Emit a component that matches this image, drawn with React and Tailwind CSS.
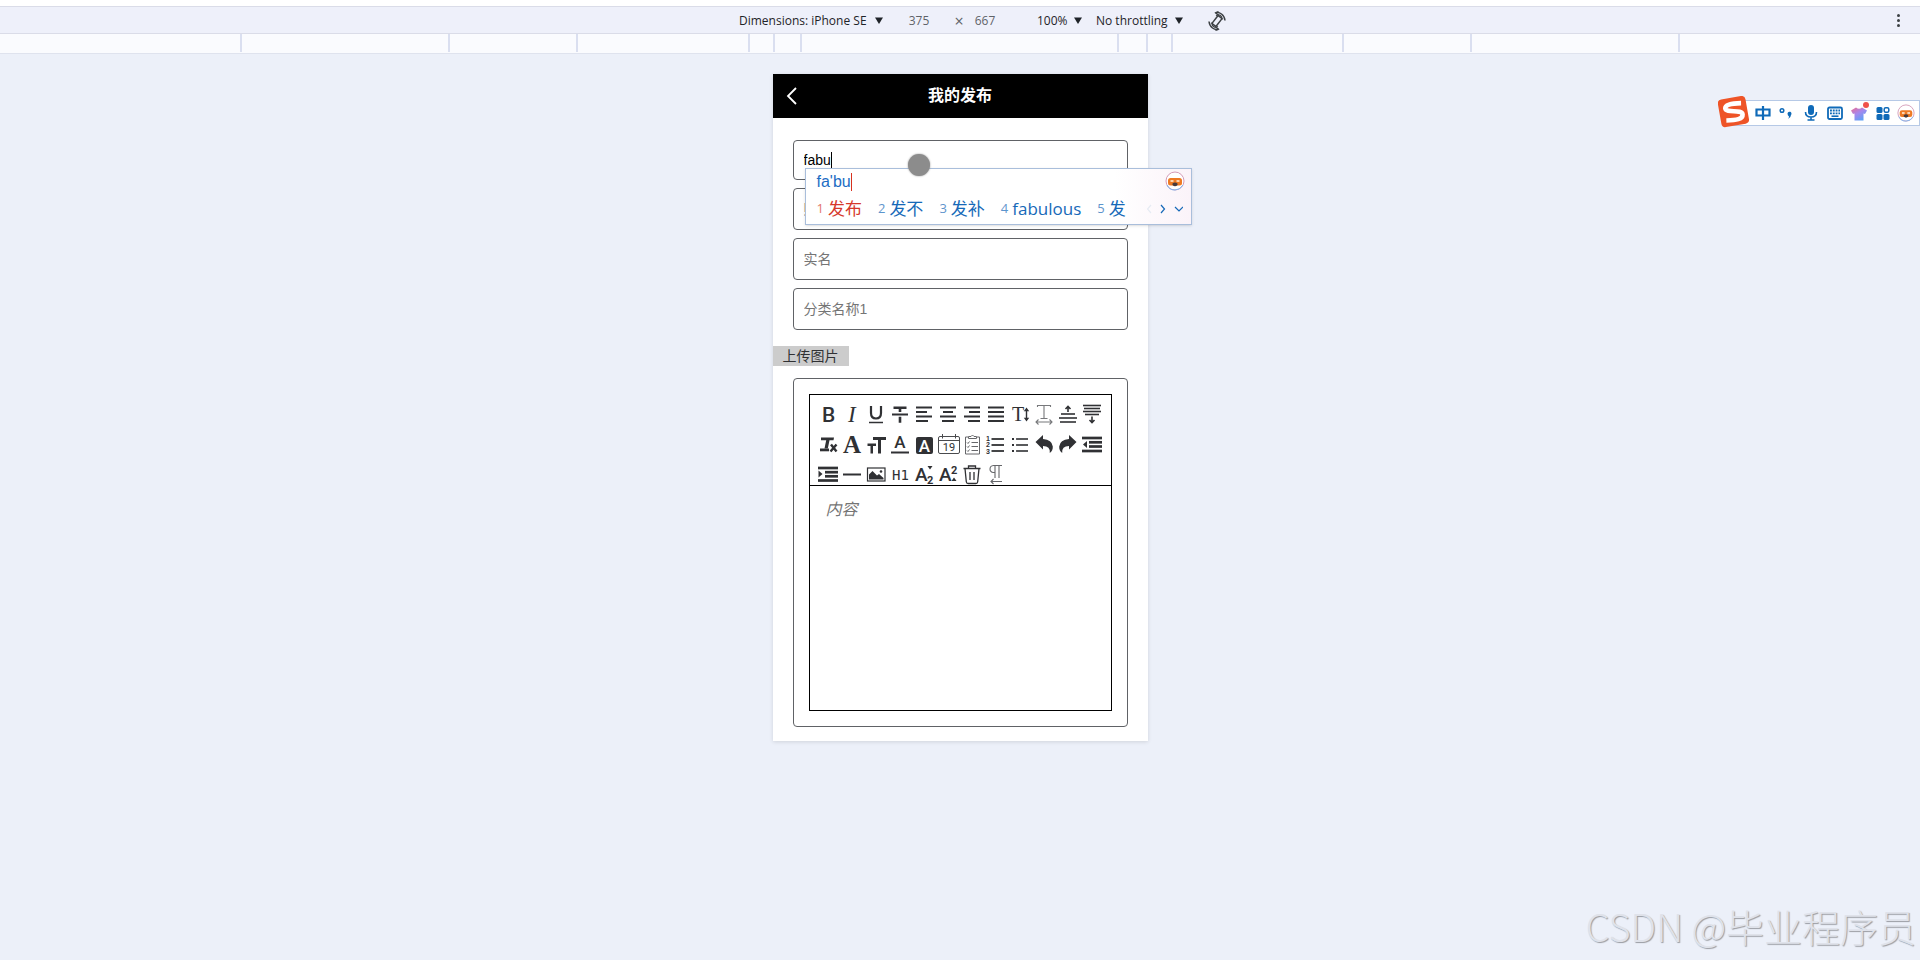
import { useState } from "react";

const ink = "#303134";

const ruler = ["w-[208px]", "w-[128px]", "w-[172px]", "w-[25px]", "w-[27px]", "w-[317px]", "w-[29px]", "w-[25px]", "w-[171px]", "w-[128px]", "w-[208px]"];

const Lines = ({ rows, width = 2 }) =>
  rows.map(([x1, x2, y]) => <path key={y} d={`M${x1} ${y}H${x2}`} stroke={ink} strokeWidth={width} />);

const tools = [
  { name: "Bold", art: <text x="6" y="18" fontSize="21" fontWeight="500" fontFamily="Roboto">B</text> },
  { name: "Italic", art: <text x="8" y="18" fontSize="23" fontStyle="italic" fontFamily="Liberation Serif">I</text> },
  {
    name: "Underline",
    art: (
      <>
        <path d="M7 2v7q0 5.500 5 5.500t5-5.500V2" fill="none" stroke={ink} strokeWidth="2.200" />
        <path d="M5 18.500h14" stroke={ink} strokeWidth="1.500" />
      </>
    ),
  },
  {
    name: "Strikethrough",
    art: <path d="M5.500 2.500h13v2.500h-5.200v3h-2.600v-3H5.500zM4 9.500h16v2H4zM10.700 12.800h2.600v6h-2.600z" />,
  },
  { name: "Align left", art: <Lines rows={[[4, 20, 3.5], [4, 15, 8], [4, 20, 12.5], [4, 16, 17]]} /> },
  { name: "Align center", art: <Lines rows={[[4, 20, 3.5], [7, 17, 8], [4, 20, 12.5], [6, 18, 17]]} /> },
  { name: "Align right", art: <Lines rows={[[4, 20, 3.5], [9, 20, 8], [4, 20, 12.5], [8, 20, 17]]} /> },
  { name: "Justify", art: <Lines rows={[[4, 20, 3.5], [4, 20, 8], [4, 20, 12.5], [4, 20, 17]]} /> },
  {
    name: "Line height",
    art: (
      <>
        <text x="4" y="17" fontSize="20" fontFamily="Liberation Serif">T</text>
        <path d="M18.500 3.500l2.700 3.700h-2v6.600h2l-2.700 3.700-2.700-3.700h2V7.200h-2z" />
      </>
    ),
  },
  {
    name: "Letter spacing",
    art: (
      <path
        d="M5.500 3V1.500h13V3M12 1.500v12.500M8.500 14.500h7M4 18h16M6.500 15.500L4 18l2.500 2.500M17.500 15.500L20 18l-2.500 2.500"
        fill="none"
        stroke="#77787b"
        strokeWidth="1.100"
      />
    ),
  },
  {
    name: "Space before",
    art: (
      <>
        <Lines width={1.6} rows={[[5, 19, 10], [3, 21, 14], [4, 20, 18]]} />
        <path d="M12 8V2.500M9.500 5L12 2.500 14.500 5" fill="none" stroke={ink} strokeWidth="1.600" />
      </>
    ),
  },
  {
    name: "Space after",
    art: (
      <>
        <Lines width={1.6} rows={[[3, 21, 1.5], [4, 20, 4.5], [3, 21, 7.5], [5, 19, 10.5]]} />
        <path d="M12 12.500v6M9.500 16L12 18.500l2.500-2.500" fill="none" stroke={ink} strokeWidth="1.600" />
      </>
    ),
  },
  {
    name: "Remove format",
    art: (
      <>
        <path d="M5 3.500h13l-.5 2.800h-4l-1.700 8.200H8.500l1.700-8.200H5z" />
        <path d="M4 14.500h9v2.800H4z" />
        <path d="M15 10.500l5.500 7M20.500 10.500l-6 7" stroke={ink} strokeWidth="2.400" />
      </>
    ),
  },
  { name: "Font family", art: <text x="3" y="18.500" fontSize="25" fontWeight="700" fontFamily="Liberation Serif">A</text> },
  {
    name: "Font size",
    art: <path d="M9 3h13v3h-5v13.500h-3V6H9zM3.500 9.500h8.500v2.500H9V19.500H6.500V12h-3z" />,
  },
  {
    name: "Text color",
    art: (
      <>
        <text x="12" y="14" fontSize="17" fontWeight="500" textAnchor="middle" fontFamily="Roboto">A</text>
        <path d="M3 17.500h18v2H3z" />
      </>
    ),
  },
  {
    name: "Background color",
    art: (
      <>
        <rect x="4" y="3" width="17" height="17" rx="2" />
        <text x="12.500" y="17.500" fontSize="17" fontWeight="500" textAnchor="middle" fill="#fff" fontFamily="Roboto">A</text>
      </>
    ),
  },
  {
    name: "Date",
    art: (
      <>
        <path d="M2.500 4a1.500 1.500 0 0 1 1.500-1.500h18A1.500 1.500 0 0 1 23.500 4v14a1.500 1.500 0 0 1-1.500 1.500H4A1.500 1.500 0 0 1 2.500 18zM2.500 6.500h21M6.500 0v4.500M19.500 0v4.500" fill="none" stroke="#4a4b4e" />
        <text x="13" y="17" fontSize="11" textAnchor="middle" fontFamily="Roboto">19</text>
      </>
    ),
  },
  {
    name: "Checklist",
    art: (
      <path
        d="M8 3H5.500v17h14V3H17M8.500 4.500v-2h2.500q1.500-3 3 0h2.500v2zM7 8.500l1 1 1.500-2M7 12.500l1 1 1.500-2M7 16.500l1 1 1.500-2M11.500 8.500H18M11.500 12.500H18M11.500 16.500H18"
        fill="none"
        stroke="#66676a"
      />
    ),
  },
  {
    name: "Ordered list",
    art: (
      <>
        <Lines width={1.8} rows={[[7.5, 20, 5], [7.5, 20, 11], [7.5, 20, 17]]} />
        <text x="2" y="6.500" fontSize="7" fontWeight="700" fontFamily="Liberation Sans">1</text>
        <text x="2" y="13" fontSize="7" fontWeight="700" fontFamily="Liberation Sans">2</text>
        <text x="2" y="19.500" fontSize="7" fontWeight="700" fontFamily="Liberation Sans">3</text>
      </>
    ),
  },
  {
    name: "Bullet list",
    art: (
      <>
        <Lines width={1.6} rows={[[8, 20, 5], [8, 20, 11], [8, 20, 17]]} />
        <path d="M4 4h2v2H4zM4 10h2v2H4zM4 16h2v2H4z" />
      </>
    ),
  },
  { name: "Undo", art: <path d="M3.500 8L11 1v4q9 .5 9.800 7.500 .2 4-3 6.500 .7-7-6.800-7v3.500z" /> },
  { name: "Redo", art: <path d="M20.500 8L13 1v4q-9 .5-9.800 7.500-.2 4 3 6.500-.7-7 6.800-7v3.500z" /> },
  {
    name: "Outdent",
    art: (
      <>
        <Lines width={2.7} rows={[[2, 22, 4], [9, 22, 8.3], [9, 22, 12.5], [2, 22, 17]]} />
        <path d="M7 7v7l-4-3.500z" />
      </>
    ),
  },
  {
    name: "Indent",
    art: (
      <>
        <Lines width={2.7} rows={[[2, 22, 4], [9, 22, 8.2], [9, 22, 12.3], [2, 22, 16.5]]} />
        <path d="M2.500 6.500v7l4-3.500z" />
      </>
    ),
  },
  { name: "Divider", art: <path d="M3 9.500h18v2H3z" /> },
  {
    name: "Image",
    art: (
      <>
        <rect x="3.500" y="4" width="17.500" height="13" fill="none" stroke={ink} strokeWidth="1.200" />
        <path d="M5 15.500v-5l3.500-3.500 4.500 4.500 2-1.500 4.500 4v1.500z" />
        <circle cx="17" cy="7.500" r="1.300" />
      </>
    ),
  },
  { name: "Header", art: <text x="4" y="16" fontSize="14" fontFamily="DejaVu Sans Mono">H1</text> },
  {
    name: "Subscript",
    art: (
      <>
        <text x="3" y="17" fontSize="19" fontWeight="500" fontFamily="Roboto">A</text>
        <text x="15" y="20" fontSize="11" fontWeight="700" fontFamily="Roboto">2</text>
        <path d="M15.500 2h5l-2.500 3.500z" />
      </>
    ),
  },
  {
    name: "Superscript",
    art: (
      <>
        <text x="3" y="17" fontSize="19" fontWeight="500" fontFamily="Roboto">A</text>
        <text x="15" y="10" fontSize="11" fontWeight="700" fontFamily="Roboto">2</text>
        <path d="M15.500 17h5l-2.500-3.500z" />
      </>
    ),
  },
  {
    name: "Clear",
    art: (
      <path
        d="M3.500 4.500h17M8.500 4.500V2h7v2.500M5 4.500l1.300 13.200q.2 1.800 1.800 1.800h7.800q1.600 0 1.800-1.800l1.300-13.200M10 8v8M14 8v8"
        fill="none"
        stroke={ink}
        strokeWidth="1.300"
      />
    ),
  },
  {
    name: "Text direction",
    art: (
      <path
        d="M18 1.500H9.500Q6 1.800 6 5t3.500 3.500h1.500M11 1.500V14M15 1.500V14M18 17.500H7M9.500 15L7 17.500 9.500 20"
        fill="none"
        stroke="#66676a"
        strokeWidth="1.100"
      />
    ),
  },
];

const Caret = () => (
  <svg className="pointer-events-none h-2 w-2" viewBox="0 0 8 8" fill="#1f2328">
    <path d="M0 .5h8l-4 6.500z" />
  </svg>
);

const DeviceSelect = ({ label, value, className }) => (
  <label className="flex items-center gap-[5px]">
    <select aria-label={label} className={`appearance-none bg-transparent outline-none ${className}`}>
      <option>{value}</option>
    </select>
    <Caret />
  </label>
);

// sogou assistant avatar
const Mascot = ({ className }) => (
  <svg className={className} viewBox="0 0 20 20">
    <circle cx="10" cy="10" r="9" fill="#fff" stroke="#d49bb8" strokeWidth="1" />
    <path d="M2 14q2 5 8 5 5 0 8-5" fill="none" stroke="#7fb6ee" strokeWidth="1" />
    <rect x="3" y="7" width="14" height="7.500" rx="2.500" fill="#ee7a24" />
    <path d="M5.500 9h3v2h-3zM11.500 9h3v2h-3z" fill="#fbd3ae" />
    <path d="M7.500 12.500q2.500-2 5 0v1.500q-2.500 2.500-5 0z" fill="#453a3c" />
  </svg>
);

const DeviceToolbar = () => (
  <header className="font-['Open_Sans','Noto_Sans',sans-serif] text-xs text-[#1f2328]">
    <div className="h-1.5 bg-white" />
    <div className="grid h-7 grid-cols-[1fr_auto_1fr] items-center border-y border-[#dadce8] bg-[#eef0fa]">
      <span />
      <div className="flex items-center pt-px pl-[46px]">
        <DeviceSelect label="Dimensions" value="Dimensions: iPhone SE" className="w-[131px]" />
        <input aria-label="Width" defaultValue="375" className="ml-5 w-8 bg-transparent text-center text-[#5f6368] outline-none" />
        <span className="mr-0.5 ml-4 w-4 text-center text-base leading-4 text-[#5f6368]">×</span>
        <input aria-label="Height" defaultValue="667" className="w-8 bg-transparent text-center text-[#5f6368] outline-none" />
        <div className="ml-9 flex gap-3.5">
          <DeviceSelect label="Zoom" value="100%" className="w-8" />
          <DeviceSelect label="Throttling" value="No throttling" className="w-[74px]" />
        </div>
        <button type="button" aria-label="Rotate" className="ml-6">
          <svg className="size-5" viewBox="0 0 20 20" fill="none" stroke="#3c4043" strokeWidth="1.500">
            <rect x="7.500" y="5" width="5" height="10" rx="1" transform="rotate(38 10 10)" />
            <path d="M8.500 1.800q3-1 6 1.200t3.500 6.500M11.500 18.200q-3 1-6-1.200T2 10.500" />
            <path d="M9 4.500q5-2.500 6.500 4M11 15.500q-5 2.500-6.500-4" strokeWidth="1.200" />
            <path d="M8 15.500l3.500 2.700-3 1.300M12 4.500L8.500 1.800l3-1.300" strokeWidth="1.200" />
          </svg>
        </button>
      </div>
      <button type="button" aria-label="More options" className="mr-5 flex flex-col gap-0.5 justify-self-end">
        <span className="size-[3px] rounded-full bg-[#3c4043]" />
        <span className="size-[3px] rounded-full bg-[#3c4043]" />
        <span className="size-[3px] rounded-full bg-[#3c4043]" />
      </button>
    </div>
    <div className="flex h-5 justify-center overflow-hidden border-b border-[#dfe3ee] bg-[#fafbfe]">
      {ruler.map((width, i) => (
        <div key={i} className={`mb-px shrink-0 border-l-2 border-[#dadff0] ${width}`} />
      ))}
      <div className="mb-px w-0.5 shrink-0 bg-[#dadff0]" />
    </div>
  </header>
);

const candidates = ["发布", "发不", "发补", "fabulous", "发"];

const CandidateWindow = () => (
  <div className="absolute top-[94px] left-8 z-10 w-[387px] border border-[#a9bedb] bg-linear-to-r from-white from-80% to-[#fbf3f9] pl-[11px] shadow-sm">
    <div className="flex items-start justify-between pr-1.5">
      <span className="flex h-[26px] items-center text-base text-[#1d6dc4]">
        fa'bu
        <span className="h-[18px] w-px bg-[#d8321f]" />
      </span>
      <Mascot className="mt-0.5 size-5" />
    </div>
    <div className="flex h-[29px] items-center justify-between pr-2 pb-px font-['Open_Sans','Noto_Sans_CJK_SC',sans-serif]">
      <ol className="flex gap-4">
        {candidates.map((word, i) => (
          <li key={word} className={`flex items-center gap-1 ${i === 0 ? "text-[#d6382b]" : "text-[#1669b8]"}`}>
            <span className="text-[13px] opacity-70">{i + 1}</span>
            <span className="text-[17px] leading-6">{word}</span>
          </li>
        ))}
      </ol>
      <svg className="h-3 w-9" viewBox="0 0 36 12" fill="none" stroke="#1669b8" strokeWidth="1.200">
        <path d="M4 2L.5 6 4 10" stroke="#e6ebf3" />
        <path d="M14 2l3.500 4L14 10M28 4l4 4 4-4" />
      </svg>
    </div>
  </div>
);

const imeIcons = [
  {
    name: "中文",
    art: <path d="M3.500 6.500h13v6h-13zM10 3v14" fill="none" stroke="#0f6ab8" strokeWidth="2.200" />,
  },
  {
    name: "标点",
    art: (
      <>
        <circle cx="5" cy="7.500" r="1.800" fill="none" stroke="#0f6ab8" strokeWidth="1.500" />
        <path d="M10.500 10.500a2 2 0 1 1 3.500 1.500q0 2.500-3 4 1-1.500 1-2.500-1.500-1-1.500-3z" />
      </>
    ),
  },
  {
    name: "语音",
    art: (
      <>
        <rect x="7" y="2" width="6" height="10" rx="3" />
        <path d="M4.500 9q0 5 5.500 5t5.500-5M10 14v3M6.500 17h7" fill="none" stroke="#0f6ab8" strokeWidth="1.600" />
      </>
    ),
  },
  {
    name: "键盘",
    art: (
      <>
        <rect x="3" y="4.500" width="14" height="11.500" rx="1.500" fill="none" stroke="#0f6ab8" strokeWidth="1.800" />
        <path d="M5 7.500h10M5 10.300h10" stroke="#0f6ab8" strokeWidth="1.800" strokeDasharray="1.900 .9" />
        <path d="M6.500 13.200h7" stroke="#0f6ab8" strokeWidth="1.600" />
      </>
    ),
  },
  {
    name: "皮肤",
    art: (
      <>
        <linearGradient id="shirt" x1="0" y1="0" x2=".7" y2="1">
          <stop offset="0" stopColor="#ef6b8f" />
          <stop offset=".5" stopColor="#a588ee" />
          <stop offset="1" stopColor="#5aa2f5" />
        </linearGradient>
        <path d="M7 4.500q3 2.500 6 0l5 3-2 3.500-1.500-.5v7h-9v-7L4 11 2 7.500z" fill="url(#shirt)" />
        <circle cx="17" cy="2" r="3" fill="#f0524b" />
      </>
    ),
  },
  {
    name: "工具箱",
    art: (
      <>
        <rect x="3.500" y="4" width="6" height="6" rx="1.500" />
        <rect x="3.500" y="11" width="6" height="6" rx="1.500" />
        <rect x="10.500" y="11" width="6" height="6" rx="1.500" />
        <rect x="11.200" y="4.700" width="4.600" height="4.600" rx="1.500" fill="none" stroke="#0f6ab8" strokeWidth="1.500" />
      </>
    ),
  },
];

const ImeBar = () => (
  <div className="absolute top-24 right-0 flex items-start">
    <svg className="z-10 -mr-5 size-8 shrink-0" viewBox="0 0 32 32">
      <g transform="rotate(-10 16 16)">
        <rect x="1.500" y="1.500" width="28" height="28" rx="4" fill="#ee5427" />
        <path
          d="M24.500 8.500q-16-2.500-16.500 2.500c0 5.500 16.500 3 16 9-.5 4.500-7 4.500-17 3"
          fill="none"
          stroke="#fff"
          strokeWidth="4.600"
        />
      </g>
    </svg>
    <div className="mt-1 flex h-[26px] items-center gap-1 border border-[#b6c9e6] bg-white pr-1 pl-[22px]">
      {imeIcons.map(({ name, art }) => (
        <button key={name} type="button" aria-label={name} className="size-5">
          <svg className="size-5 overflow-visible" viewBox="0 0 20 20" fill="#0f6ab8">{art}</svg>
        </button>
      ))}
      <button type="button" aria-label="助手">
        <Mascot className="size-[18px]" />
      </button>
    </div>
  </div>
);

const fieldClass =
  "w-full rounded border border-[#606266] bg-white px-2.5 text-sm text-black outline-none placeholder:text-[#757575]";

const PublishPage = () => {
  const [title, setTitle] = useState("fabu");

  return (
    <main className="relative mx-auto mt-5 w-[375px] bg-white pb-3.5 shadow-[0_1px_4px_rgba(0,0,0,0.12)]">
      <div className="grid h-11 grid-cols-[44px_1fr_44px] items-center bg-black text-white">
        <button type="button" aria-label="返回" className="pl-3">
          <svg className="h-[18px] w-3" viewBox="0 0 12 18" fill="none" stroke="#fff" strokeWidth="1.800">
            <path d="M11 1L3 9l8 8" />
          </svg>
        </button>
        <h1 className="text-center text-base font-bold">我的发布</h1>
      </div>
      <form className="pt-[22px]" onSubmit={(e) => e.preventDefault()}>
        <div className="flex flex-col gap-2 px-5">
          <div className="relative">
            <input aria-label="标题" className={`block h-10 ${fieldClass}`} value={title} onChange={(e) => setTitle(e.target.value)} />
            <span className="absolute top-3 left-[38px] h-4 w-px bg-black" />
          </div>
          <input aria-label="账号" className={`h-[42px] ${fieldClass}`} placeholder="账号" />
          <input aria-label="实名" className={`h-[42px] ${fieldClass}`} placeholder="实名" />
          <input aria-label="分类名称" className={`h-[42px] ${fieldClass}`} placeholder="分类名称1" />
        </div>
        <button type="button" className="mt-4 block h-5 bg-[#cccccc] px-2.5 text-sm leading-5 text-[#303133]">
          上传图片
        </button>
        <div className="mx-5 mt-3 rounded border border-[#606266] px-[15px] py-[15px]">
          <div className="border border-black">
            <div className="flex h-[91px] flex-wrap content-start gap-y-2.5 border-b border-black pt-[9px] pl-1.5">
              {tools.map(({ name, art }) => (
                <button key={name} type="button" aria-label={name} className="h-5 w-6">
                  <svg className="h-5 w-6 overflow-visible" viewBox="0 0 24 20" fill={ink}>{art}</svg>
                </button>
              ))}
            </div>
            <textarea
              aria-label="内容"
              placeholder="内容"
              className="block h-56 w-full resize-none px-4 py-3 text-base outline-none placeholder:text-[#757575] placeholder:italic"
            />
          </div>
        </div>
      </form>
      <CandidateWindow />
      <div className="absolute top-20 left-[135px] z-20 size-[22px] rounded-full bg-[#8c8c8c] shadow-[0_0_2px_#8c8c8c]" />
    </main>
  );
};

const App = () => {
  return (
    <div className="relative min-h-screen overflow-hidden bg-[#ecf0f9] font-['Liberation_Sans','Noto_Sans_CJK_SC',sans-serif]">
      <DeviceToolbar />
      <PublishPage />
      <ImeBar />
      <p className="absolute right-1 bottom-3.5 font-['Noto_Sans_CJK_SC',sans-serif] text-[38px] leading-10 font-light text-[#dfe2ea] [text-shadow:1px_1px_1px_#9a9ca2]">
        CSDN @毕业程序员
      </p>
    </div>
  );
};

export default App;
